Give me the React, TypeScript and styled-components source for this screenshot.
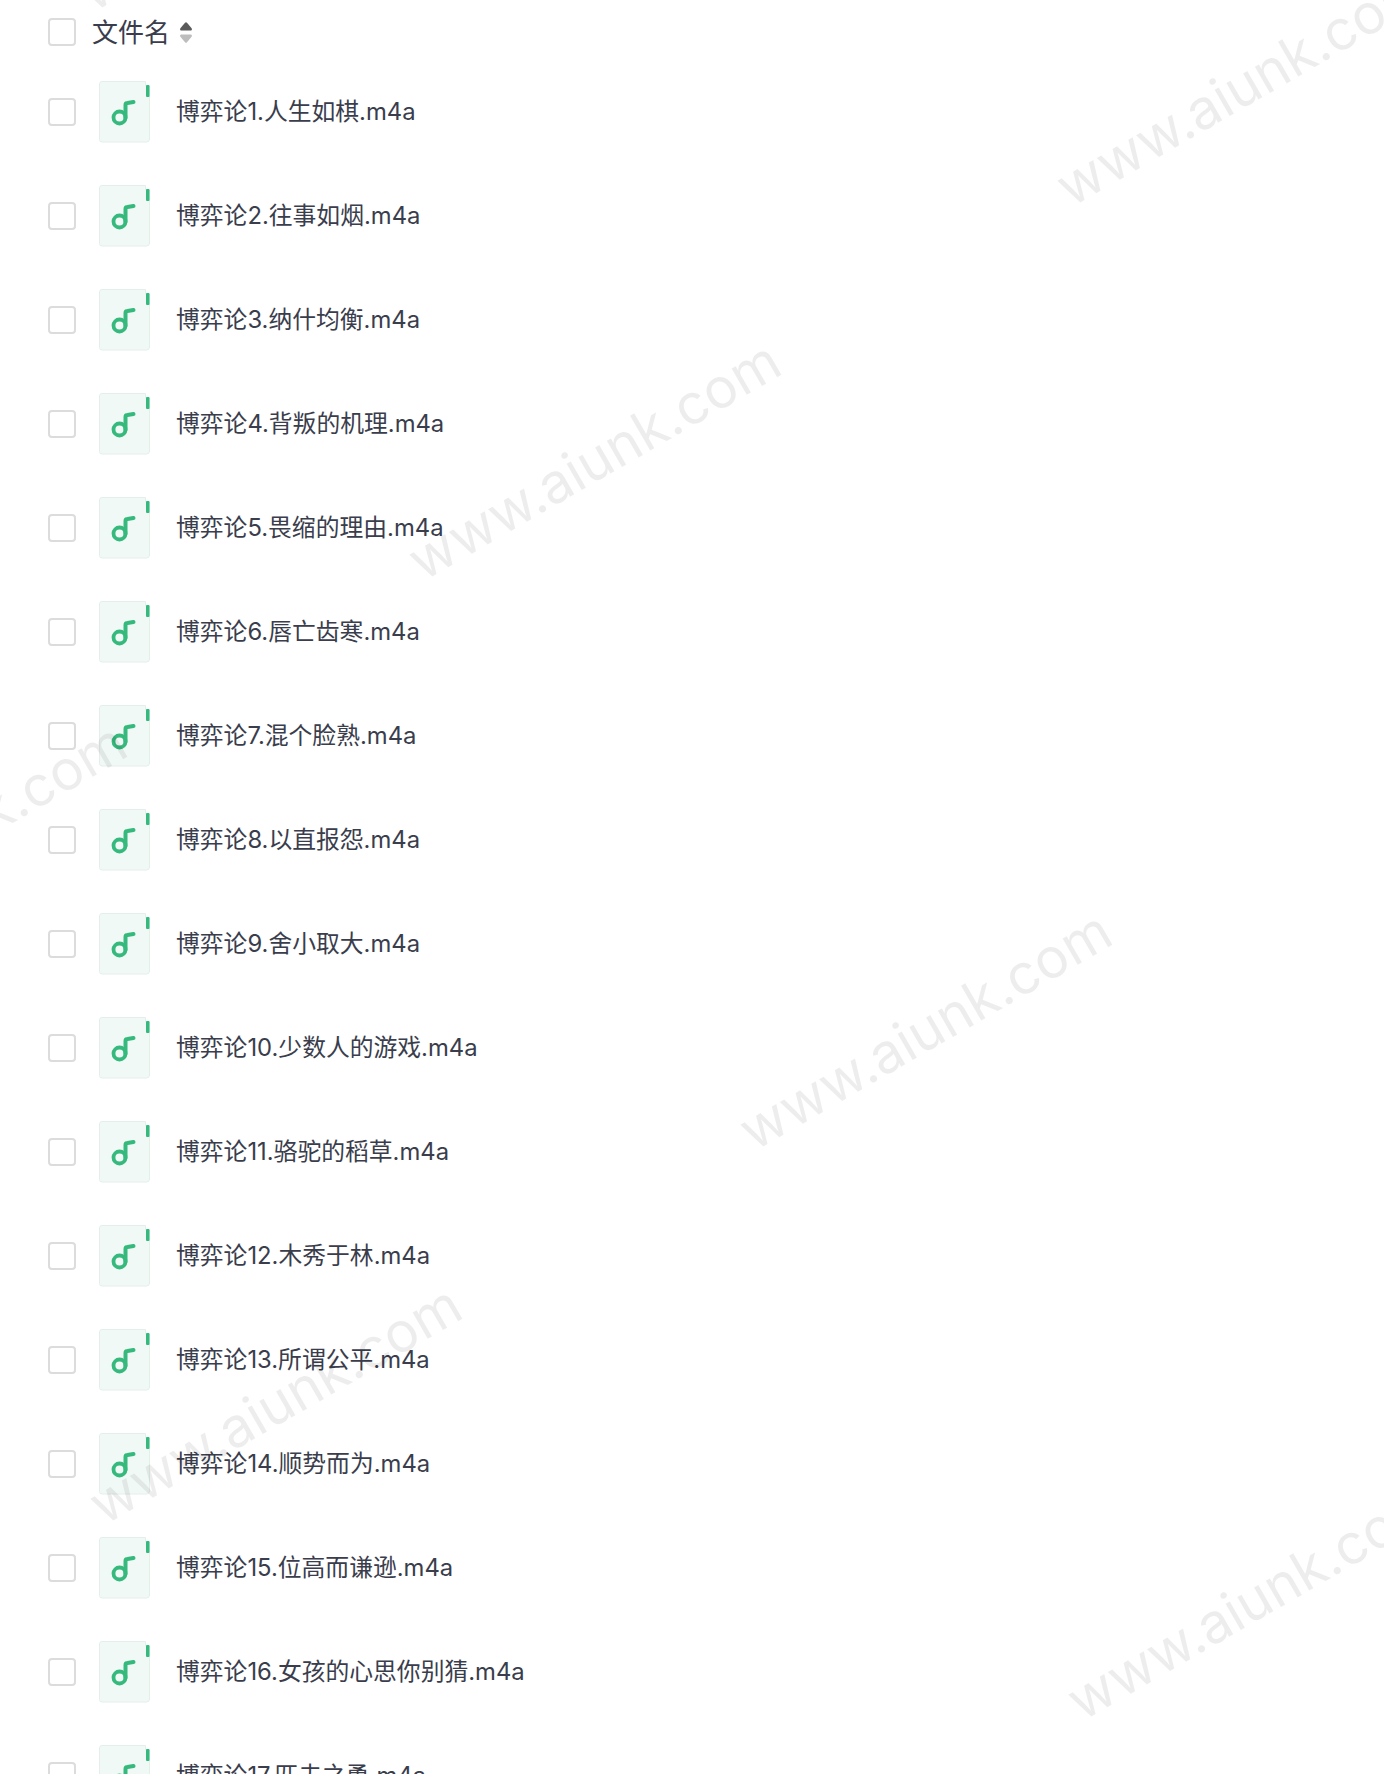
import React from "react";
import styled, { createGlobalStyle } from "styled-components";

const GlobalStyle = createGlobalStyle`
  html, body {
    margin: 0;
    padding: 0;
    background: #fff;
  }
`;

const Page = styled.div`
  position: relative;
  height: 1774px;
  overflow: hidden;
  background: #fff;
  font-family: Inter, "Noto Sans CJK SC", sans-serif;
  color: #3a3d4c;
`;

const HeaderRow = styled.div`
  display: flex;
  align-items: center;
  box-sizing: border-box;
  height: 60px;
  padding: 4px 0 0 48px;
`;

const HeaderLabel = styled.span`
  margin: 2px 0 0 16px;
  font-size: 26px;
  line-height: 32px;
  color: #3a3d4c;
`;

const SortIcon = styled.svg`
  margin-left: 10px;
  flex: none;
`;

const FileRow = styled.div`
  display: flex;
  align-items: center;
  height: 104px;
  padding-left: 48px;
`;

const CheckBox = styled.span`
  display: block;
  flex: none;
  box-sizing: border-box;
  width: 28px;
  height: 28px;
  border: 2px solid #dcdcdc;
  border-radius: 4px;
  background: #fff;
`;

const FileIconSvg = styled.svg`
  display: block;
  flex: none;
  margin: 0 25px 0 23px;
`;

const FileName = styled.span`
  font-size: 23.8px;
  line-height: 30px;
  white-space: nowrap;
`;

const Watermark = styled.div<{ $x: number; $y: number }>`
  position: absolute;
  left: ${(p) => p.$x}px;
  top: ${(p) => p.$y}px;
  transform: translate(-50%, -50%) rotate(-30deg);
  font-family: Inter, sans-serif;
  font-size: 55.5px;
  line-height: 60px;
  white-space: nowrap;
  color: rgba(0, 0, 0, 0.07);
  pointer-events: none;
`;

const files = [
  "博弈论1.人生如棋.m4a",
  "博弈论2.往事如烟.m4a",
  "博弈论3.纳什均衡.m4a",
  "博弈论4.背叛的机理.m4a",
  "博弈论5.畏缩的理由.m4a",
  "博弈论6.唇亡齿寒.m4a",
  "博弈论7.混个脸熟.m4a",
  "博弈论8.以直报怨.m4a",
  "博弈论9.舍小取大.m4a",
  "博弈论10.少数人的游戏.m4a",
  "博弈论11.骆驼的稻草.m4a",
  "博弈论12.木秀于林.m4a",
  "博弈论13.所谓公平.m4a",
  "博弈论14.顺势而为.m4a",
  "博弈论15.位高而谦逊.m4a",
  "博弈论16.女孩的心思你别猜.m4a",
  "博弈论17.匹夫之勇.m4a",
];

const watermarks = [
  { x: 264, y: -109 },
  { x: 1242, y: 86 },
  { x: 594, y: 460 },
  { x: -60, y: 842 },
  { x: 925, y: 1030 },
  { x: 275, y: 1404 },
  { x: 1253, y: 1600 },
];

const AudioFileIcon = () => (
  <FileIconSvg width="52" height="62" viewBox="0 0 52 62" fill="none">
    <path
      d="M3 .5H46.5V5H50.5V58a3 3 0 0 1-3 3H3a2.5 2.5 0 0 1-2.5-2.5V3A2.5 2.5 0 0 1 3 .5Z"
      fill="#f1f9f6"
      stroke="#e4efea"
    />
    <rect x="47" y="0" width="5" height="4.5" fill="#fff" />
    <rect x="47" y="4" width="3.5" height="12" rx="1" fill="#35b97c" />
    <circle cx="20.5" cy="36.5" r="6" stroke="#35b97c" strokeWidth="3.8" />
    <path
      d="M26.5 37V24a2 2 0 0 1 2-2l6-1"
      stroke="#35b97c"
      strokeWidth="4"
      strokeLinecap="round"
    />
  </FileIconSvg>
);

export default function App() {
  return (
    <Page>
      <GlobalStyle />
      <HeaderRow>
        <CheckBox />
        <HeaderLabel>文件名</HeaderLabel>
        <SortIcon width="12" height="21" viewBox="0 0 12 21">
          <path d="M5 .8a1.4 1.4 0 0 1 2 0l4.6 5.4c.7.9.2 2.3-1 2.3H1.4C.2 8.5-.3 7.1.4 6.2Z" fill="#5a5a5a" />
          <path d="M5 20.2a1.4 1.4 0 0 0 2 0l4.6-5.4c.7-.9.2-2.3-1-2.3H1.4c-1.2 0-1.7 1.4-1 2.3Z" fill="#bdbdbd" />
        </SortIcon>
      </HeaderRow>
      {files.map((name) => (
        <FileRow key={name}>
          <CheckBox />
          <AudioFileIcon />
          <FileName>{name}</FileName>
        </FileRow>
      ))}
      {watermarks.map((w) => (
        <Watermark key={`${w.x}-${w.y}`} $x={w.x} $y={w.y}>
          www.aiunk.com
        </Watermark>
      ))}
    </Page>
  );
}
